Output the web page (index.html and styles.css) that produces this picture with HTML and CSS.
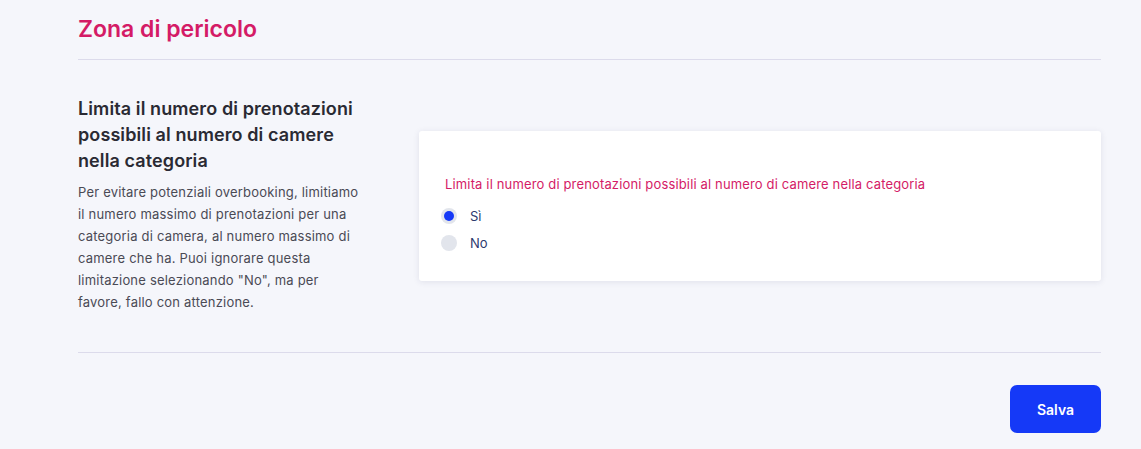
FILE: index.html
```html
<!DOCTYPE html>
<html lang="it">
<head>
<meta charset="utf-8">
<link rel="stylesheet" href="styles.css">
</head>
<body>
<div class="page">
  <h1 class="title">Zona di pericolo</h1>
  <div class="section">
    <div class="info">
      <h2 class="info-title">Limita il numero di prenotazioni possibili al numero di camere nella categoria</h2>
      <p class="info-text">Per evitare potenziali overbooking, limitiamo il numero massimo di prenotazioni per una categoria di camera, al numero massimo di camere che ha. Puoi ignorare questa limitazione selezionando "No", ma per favore, fallo con attenzione.</p>
    </div>
    <div class="card">
      <div class="card-label">Limita il numero di prenotazioni possibili al numero di camere nella categoria</div>
      <label class="radio"><span class="dot checked"></span><span class="radio-text">Sì</span></label>
      <label class="radio"><span class="dot"></span><span class="radio-text">No</span></label>
    </div>
  </div>
  <div class="actions">
    <button class="btn">Salva</button>
  </div>
</div>
</body>
</html>
```
FILE: styles.css
```css
html, body {
  margin: 0;
  padding: 0;
  background: #f5f6fb;
  font-family: Inter, "Noto Sans", sans-serif;
}
.page {
  width: 1023px;
  margin-left: 78px;
}
.title {
  margin: 0;
  padding-top: 15px;
  box-sizing: border-box;
  height: 60px;
  font-size: 23px;
  font-weight: 600;
  color: #d41b66;
  line-height: 28px;
  border-bottom: 1px solid #dcdbeb;
}
.section {
  display: flex;
  justify-content: space-between;
  padding-top: 36px;
  padding-bottom: 39px;
  border-bottom: 1px solid #dcdbeb;
}
.info {
  width: 285px;
}
.info-title {
  margin: 0;
  font-size: 18px;
  letter-spacing: 0.1px;
  font-weight: 600;
  line-height: 26px;
  color: #2a2a33;
}
.info-text {
  margin: 7px 0 0;
  font-size: 13px;
  letter-spacing: 0.2px;
  line-height: 22px;
  color: #4a4a55;
}
.card {
  width: 682px;
  height: 150px;
  box-sizing: border-box;
  margin-top: 35px;
  background: #fff;
  border-radius: 3px;
  box-shadow: 0 1px 6px rgba(40, 40, 90, 0.10);
  padding: 45px 30px 0 26px;
}
.card-label {
  font-size: 13px;
  letter-spacing: 0.15px;
  color: #d41b66;
  line-height: 16px;
  margin-bottom: 10px;
}
.radio {
  display: flex;
  align-items: center;
  height: 27px;
  margin-left: -4px;
}
.dot {
  width: 16px;
  height: 16px;
  border-radius: 50%;
  background: #e2e5ec;
  box-sizing: border-box;
  position: relative;
}
.dot.checked::after {
  content: "";
  position: absolute;
  left: 3px;
  top: 3px;
  width: 10px;
  height: 10px;
  border-radius: 50%;
  background: #1539f7;
}
.radio-text {
  margin-left: 13px;
  font-size: 13px;
  color: #2d3a6e;
}
.actions {
  display: flex;
  justify-content: flex-end;
  padding-top: 32px;
}
.btn {
  width: 91px;
  height: 48px;
  border: none;
  border-radius: 7px;
  background: #1539f7;
  color: #fff;
  font-family: Inter, "Noto Sans", sans-serif;
  font-size: 14px;
  font-weight: 600;
}
```
